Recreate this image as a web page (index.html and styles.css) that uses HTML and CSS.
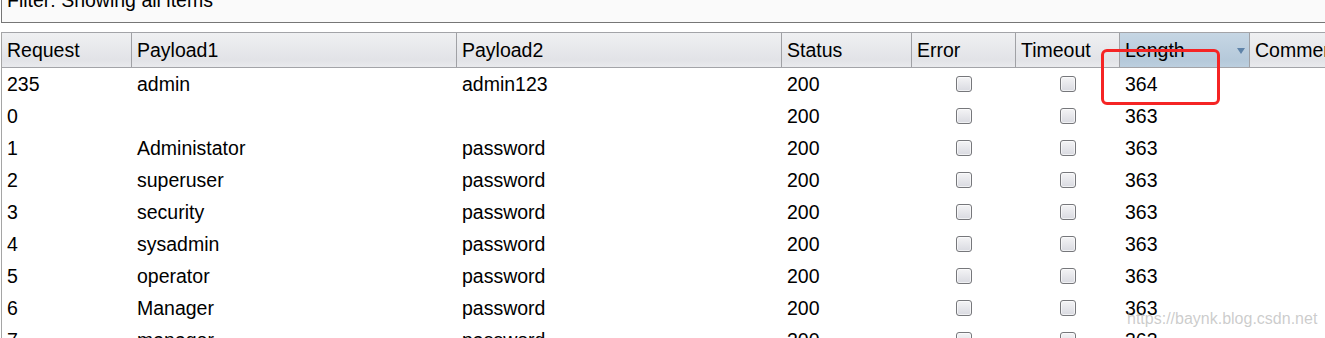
FILE: index.html
```html
<!DOCTYPE html>
<html lang="en">
<head>
<meta charset="utf-8">
<title>Intruder results</title>
<link rel="stylesheet" href="styles.css">
</head>
<body>
<div class="page">
  <div class="filter"><span class="filter-text">Filter: Showing all items</span></div>
  <div class="table">
    <div class="row head">
      <div class="hc">Request</div>
      <div class="hc">Payload1</div>
      <div class="hc">Payload2</div>
      <div class="hc">Status</div>
      <div class="hc">Error</div>
      <div class="hc">Timeout</div>
      <div class="hc sorted"><span>Length</span><span class="arrow"></span></div>
      <div class="hc last">Comment</div>
    </div>
    <div class="row"><div class="c">235</div><div class="c">admin</div><div class="c">admin123</div><div class="c">200</div><div class="c cb"><span class="box"></span></div><div class="c cb"><span class="box"></span></div><div class="c">364</div><div class="c"></div></div>
    <div class="row"><div class="c">0</div><div class="c"></div><div class="c"></div><div class="c">200</div><div class="c cb"><span class="box"></span></div><div class="c cb"><span class="box"></span></div><div class="c">363</div><div class="c"></div></div>
    <div class="row"><div class="c">1</div><div class="c">Administator</div><div class="c">password</div><div class="c">200</div><div class="c cb"><span class="box"></span></div><div class="c cb"><span class="box"></span></div><div class="c">363</div><div class="c"></div></div>
    <div class="row"><div class="c">2</div><div class="c">superuser</div><div class="c">password</div><div class="c">200</div><div class="c cb"><span class="box"></span></div><div class="c cb"><span class="box"></span></div><div class="c">363</div><div class="c"></div></div>
    <div class="row"><div class="c">3</div><div class="c">security</div><div class="c">password</div><div class="c">200</div><div class="c cb"><span class="box"></span></div><div class="c cb"><span class="box"></span></div><div class="c">363</div><div class="c"></div></div>
    <div class="row"><div class="c">4</div><div class="c">sysadmin</div><div class="c">password</div><div class="c">200</div><div class="c cb"><span class="box"></span></div><div class="c cb"><span class="box"></span></div><div class="c">363</div><div class="c"></div></div>
    <div class="row"><div class="c">5</div><div class="c">operator</div><div class="c">password</div><div class="c">200</div><div class="c cb"><span class="box"></span></div><div class="c cb"><span class="box"></span></div><div class="c">363</div><div class="c"></div></div>
    <div class="row"><div class="c">6</div><div class="c">Manager</div><div class="c">password</div><div class="c">200</div><div class="c cb"><span class="box"></span></div><div class="c cb"><span class="box"></span></div><div class="c">363</div><div class="c"></div></div>
    <div class="row"><div class="c">7</div><div class="c">manager</div><div class="c">password</div><div class="c">200</div><div class="c cb"><span class="box"></span></div><div class="c cb"><span class="box"></span></div><div class="c">363</div><div class="c"></div></div>
  </div>
  <div class="highlight"></div>
  <div class="watermark">https://baynk.blog.csdn.net</div>
</div>
</body>
</html>
```

FILE: styles.css
```css
html, body {
  margin: 0;
  padding: 0;
  background: #ffffff;
  overflow: hidden;
}

.page {
  position: relative;
  width: 1325px;
  height: 338px;
  overflow: hidden;
  padding-left: 1px;
  box-sizing: border-box;
  font-family: "Liberation Sans", Arial, sans-serif;
  font-size: 19.5px;
  color: #000;
}

.filter {
  margin-top: -11px;
  height: 33px;
  border: 1px solid #767676;
  border-top: none;
  border-right: none;
  background: #fafafa;
  padding-left: 5px;
  line-height: 22px;
  overflow: hidden;
}

.table {
  margin-top: 9px;
  border-left: 1px solid #a5a5a5;
}

.row {
  display: grid;
  grid-template-columns: 130px 325px 325px 130px 104px 104px 130px 1fr;
  height: 32px;
  line-height: 32px;
  white-space: nowrap;
}

.row.head {
  height: 36px;
  line-height: 34px;
  border-top: 1px solid #a3a4a8;
  border-bottom: 1px solid #a3a4a8;
  box-sizing: border-box;
  background: linear-gradient(#eff0f2, #e2e3e7 80%, #e9eaed);
}

.hc {
  border-right: 1px solid #a0a1a5;
  padding-left: 5px;
  overflow: hidden;
}

.hc.last {
  border-right: none;
}

.hc.sorted {
  display: flex;
  justify-content: space-between;
  align-items: center;
  padding-right: 4px;
  background: linear-gradient(#c6d6e4, #b5c9da 80%, #bccfdf);
}

.arrow {
  width: 0;
  height: 0;
  border-left: 4px solid transparent;
  border-right: 4px solid transparent;
  border-top: 6px solid #5f83a8;
  margin-top: 1px;
}

.c {
  padding-left: 5px;
  overflow: hidden;
}

.c.cb {
  padding-left: 0;
  display: flex;
  justify-content: center;
  align-items: center;
}

.box {
  width: 16px;
  height: 16px;
  box-sizing: border-box;
  border: 1px solid #76777b;
  border-radius: 3px;
  background: linear-gradient(#f4f4f6, #d9dae1);
  box-shadow: inset 0 0 0 1px rgba(255, 255, 255, 0.6);
}

.highlight {
  position: absolute;
  left: 1101px;
  top: 49px;
  width: 119px;
  height: 56px;
  box-sizing: border-box;
  border: 3px solid #f52424;
  border-radius: 6px;
}

.watermark {
  position: absolute;
  left: 1127px;
  top: 310px;
  font-size: 16px;
  color: rgba(170, 170, 170, 0.6);
  white-space: nowrap;
}
```
